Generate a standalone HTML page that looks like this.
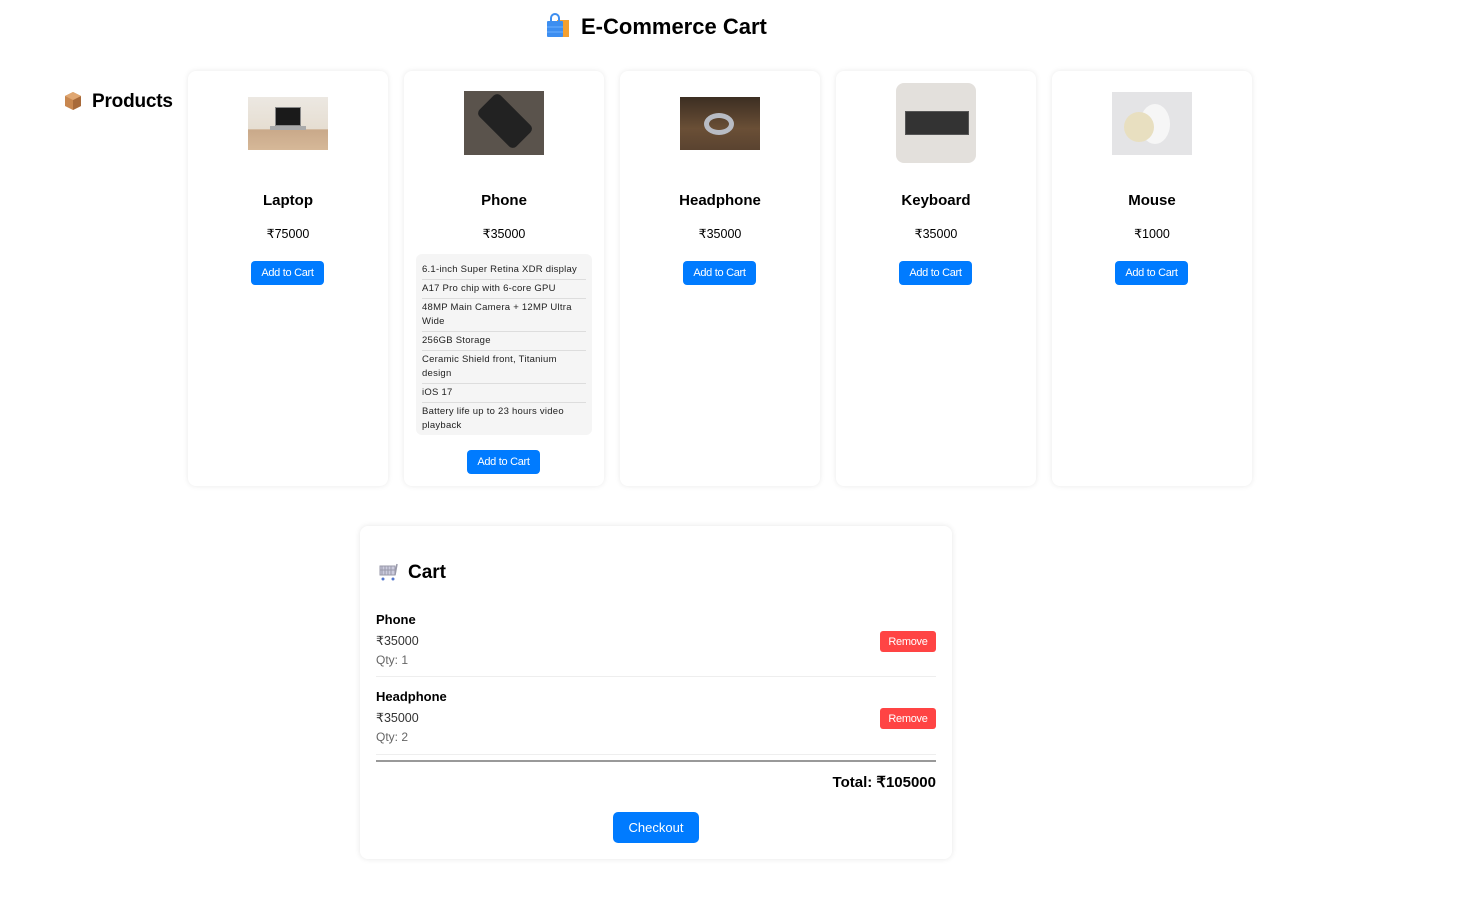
<!DOCTYPE html>
<html><head><meta charset="utf-8"><style>
*{box-sizing:border-box;margin:0;padding:0}
body{width:1474px;height:905px;background:#fff;font-family:"Liberation Sans",sans-serif;color:#000;position:relative;overflow:hidden}
.a{position:absolute}
.card{position:absolute;top:71px;width:200px;height:415px;background:#fff;border-radius:8px;box-shadow:0 0 6px rgba(0,0,0,.09)}
.name{position:absolute;left:0;width:200px;top:121px;text-align:center;font-weight:bold;font-size:15px}
.price{position:absolute;left:0;width:200px;top:155px;text-align:center;font-size:12.5px}
.btn{position:absolute;width:73px;height:24px;background:#007bff;color:#fff;border-radius:4px;font-size:11px;text-align:center;line-height:25px;letter-spacing:-.3px}
.img{position:absolute;left:60px;width:80px}
.spec{position:absolute;left:416px;top:254px;width:176px;height:181px;background:#f5f5f5;border-radius:6px;padding:7px 6px 0 6px;font-size:9.5px;line-height:14px;color:#222;letter-spacing:.25px}
.spec div{border-bottom:1px solid #ddd;padding:2px 0 2px}
.spec div:last-child{border:none}
.rm{position:absolute;left:880px;width:56px;height:21px;background:#f44;color:#fff;border-radius:3px;font-size:11px;text-align:center;line-height:22px;letter-spacing:-.3px}
</style></head><body>
<div class="a" style="left:546px;top:13px;width:24px;height:26px">
<svg width="24" height="26"><rect x="11" y="7" width="12" height="17" fill="#f5a030"/><rect x="1" y="8" width="16" height="16" rx="1" fill="#3d8ef0"/><path d="M5 9 V5 a4 4 0 0 1 8 0 V9" stroke="#3d8ef0" stroke-width="2" fill="none"/><line x1="1" y1="14" x2="17" y2="14" stroke="#6ab0ff"/><line x1="1" y1="19" x2="17" y2="19" stroke="#6ab0ff"/></svg></div>
<div class="a" style="left:581px;top:14px;font-size:22px;font-weight:bold">E-Commerce Cart</div>

<div class="a" style="left:64px;top:91px;width:18px;height:20px"><svg width="18" height="20"><path d="M9 1 L17 5 L17 15 L9 19 L1 15 L1 5Z" fill="#c8874f"/><path d="M9 9 L17 5 L17 15 L9 19Z" fill="#a86a3a"/><path d="M1 5 L9 1 L17 5 L9 9Z" fill="#e0a772"/></svg></div>
<div class="a" style="left:92px;top:91px;font-size:19px;font-weight:bold;letter-spacing:-.2px">Products</div>

<div class="card" style="left:188px">
 <div class="img" style="top:26px;height:53px;background:linear-gradient(#ece8e2 0,#e6ded2 60%,#c9a98a 62%,#d6b898 100%)"><div class="a" style="left:27px;top:10px;width:26px;height:19px;background:#1a1a1a;border:1px solid #888"></div><div class="a" style="left:22px;top:29px;width:36px;height:4px;background:#aaa"></div></div>
 <div class="name">Laptop</div><div class="price">₹75000</div>
 <div class="btn" style="left:63px;top:190px">Add to Cart</div>
</div>
<div class="card" style="left:404px">
 <div class="img" style="top:20px;height:64px;background:#5a534c"><div class="a" style="width:30px;height:52px;background:#222;border-radius:5px;transform:rotate(-45deg);left:26px;top:4px"></div></div>
 <div class="name">Phone</div><div class="price">₹35000</div>
 <div class="btn" style="left:63px;top:379px">Add to Cart</div>
</div>
<div class="spec">
<div>6.1-inch Super Retina XDR display</div><div>A17 Pro chip with 6-core GPU</div><div>48MP Main Camera + 12MP Ultra Wide</div><div>256GB Storage</div><div>Ceramic Shield front, Titanium design</div><div>iOS 17</div><div>Battery life up to 23 hours video playback</div></div>
<div class="card" style="left:620px">
 <div class="img" style="top:26px;height:53px;background:linear-gradient(#3c2e22,#6a4f36 60%,#5a4330)"><div class="a" style="left:24px;top:16px;width:30px;height:22px;border-radius:50%;border:5px solid #b8bcc4"></div></div>
 <div class="name">Headphone</div><div class="price">₹35000</div>
 <div class="btn" style="left:63px;top:190px">Add to Cart</div>
</div>
<div class="card" style="left:836px">
 <div class="img" style="top:12px;height:80px;border-radius:8px;background:#e3e0dc"><div class="a" style="left:9px;top:28px;width:64px;height:24px;background:#333;border:1px solid #555"></div></div>
 <div class="name">Keyboard</div><div class="price">₹35000</div>
 <div class="btn" style="left:63px;top:190px">Add to Cart</div>
</div>
<div class="card" style="left:1052px">
 <div class="img" style="top:21px;height:63px;background:#e4e4e6"><div class="a" style="left:28px;top:12px;width:30px;height:40px;border-radius:50%;background:#f6f6f6"></div><div class="a" style="left:12px;top:20px;width:30px;height:30px;border-radius:50%;background:#e8dfc0"></div></div>
 <div class="name">Mouse</div><div class="price">₹1000</div>
 <div class="btn" style="left:63px;top:190px">Add to Cart</div>
</div>

<div class="a" style="left:360px;top:526px;width:592px;height:333px;border-radius:8px;box-shadow:0 0 6px rgba(0,0,0,.1)"></div>
<div class="a" style="left:378px;top:562px"><svg width="22" height="20"><rect x="2" y="4" width="15" height="9" fill="#ccd" stroke="#99a"/><path d="M4 4v9M7 4v9M10 4v9M13 4v9M2 8h15" stroke="#99a"/><path d="M17 13 L19 2" stroke="#99a" stroke-width="1.5"/><circle cx="5" cy="17" r="1.5" fill="#57c"/><circle cx="15" cy="17" r="1.5" fill="#57c"/></svg></div>
<div class="a" style="left:408px;top:562px;font-size:19px;font-weight:bold">Cart</div>
<div class="a" style="left:376px;top:612px;font-size:13px;font-weight:bold">Phone</div>
<div class="a" style="left:376px;top:633px;font-size:12.5px;color:#333">₹35000</div>
<div class="a" style="left:376px;top:653px;font-size:12px;color:#666">Qty: 1</div>
<div class="rm" style="top:631px">Remove</div>
<div class="a" style="left:376px;top:676px;width:560px;height:1px;background:#eee"></div>
<div class="a" style="left:376px;top:689px;font-size:13px;font-weight:bold">Headphone</div>
<div class="a" style="left:376px;top:710px;font-size:12.5px;color:#333">₹35000</div>
<div class="a" style="left:376px;top:730px;font-size:12px;color:#666">Qty: 2</div>
<div class="rm" style="top:708px">Remove</div>
<div class="a" style="left:376px;top:754px;width:560px;height:1px;background:#eee"></div>
<div class="a" style="left:376px;top:760px;width:560px;height:2px;background:#999"></div>
<div class="a" style="left:736px;width:200px;top:773px;text-align:right;font-size:15px;font-weight:bold">Total: ₹105000</div>
<div class="a" style="left:613px;top:812px;width:86px;height:31px;background:#007bff;border-radius:5px;color:#fff;font-size:13px;text-align:center;line-height:31px">Checkout</div>
</body></html>
